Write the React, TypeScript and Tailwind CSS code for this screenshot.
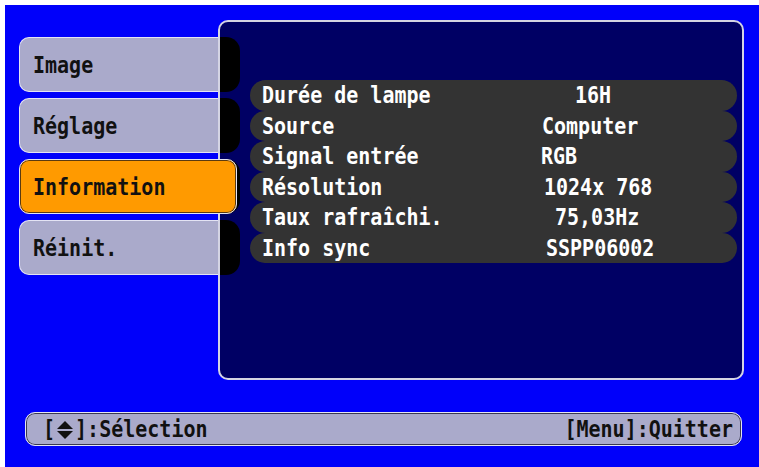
import type { ReactNode } from 'react';

const tabs = [
  { label: 'Image', active: false },
  { label: 'Réglage', active: false },
  { label: 'Information', active: true },
  { label: 'Réinit.', active: false },
];

const rows = [
  { label: 'Durée de lampe', value: '16H', pad: 'pl-[34px]' },
  { label: 'Source', value: 'Computer', pad: 'pl-[1px]' },
  { label: 'Signal entrée', value: 'RGB', pad: 'pl-0' },
  { label: 'Résolution', value: '1024x 768', pad: 'pl-[3px]' },
  { label: 'Taux rafraîchi.', value: '75,03Hz', pad: 'pl-[14px]' },
  { label: 'Info sync', value: 'SSPP06002', pad: 'pl-[5px]' },
];

// tall, narrow OSD lettering
function Osd({ children }: { children: ReactNode }) {
  return <span className="inline-block scale-y-[1.15] whitespace-pre">{children}</span>;
}

function UpDown() {
  return (
    <svg width="18" height="18" viewBox="0 0 18 18" className="inline-block mx-[1px] -mb-[2px]">
      <polygon points="1,8 9,0 17,8" fill="#111" />
      <polygon points="1,10 17,10 9,18" fill="#111" />
    </svg>
  );
}

export default function App() {
  return (
    <div className="w-[759px] h-[467px] bg-white pl-[5px] pt-[5px] overflow-hidden font-['DejaVu_Sans_Mono',monospace] font-bold text-[20px] leading-none">
      <div className="w-full h-full bg-[#0000fa] flex flex-col">
        <div className="flex pt-[15px]">
          {/* menu tabs */}
          <div className="flex flex-col gap-[6px] pt-[17px] pl-[14px] w-[213px]">
            {tabs.map(t => (
              <div
                key={t.label}
                className={`h-[55px] flex items-center pl-[13px] rounded-l-[10px] border border-[#e4e4f4] text-[#111] ${
                  t.active
                    ? 'w-[218px] -mr-[19px] relative z-10 bg-[#ff9a00] rounded-r-[10px] shadow-[inset_0_0_0_1px_#5a3a10]'
                    : 'w-[199px] bg-[#aaaacb] border-r-0'
                }`}
              >
                <Osd>{t.label}</Osd>
              </div>
            ))}
          </div>

          {/* information panel */}
          <div className="w-[526px] h-[360px] border-2 border-[#d4d4e4] rounded-[10px] bg-[#000064] flex">
            <div className="flex flex-col gap-[6px] pt-[15px] w-[20px] shrink-0">
              {tabs.map(t => (
                <div key={t.label} className="h-[55px] bg-black rounded-r-[14px]" />
              ))}
            </div>
            <div className="flex-1 mt-[58px] ml-[10px] mr-[5px]">
              {rows.map(r => (
                <div key={r.label} className="h-[30.5px] rounded-full bg-[#333333] flex items-center pl-[12px] text-white">
                  <div className="w-[279px]">
                    <Osd>{r.label}</Osd>
                  </div>
                  <div className={r.pad}>
                    <Osd>{r.value}</Osd>
                  </div>
                </div>
              ))}
            </div>
          </div>
        </div>

        {/* help bar */}
        <div className="mt-[32px] ml-[20px] w-[717px] h-[34px] rounded-[10px] border border-[#e4e4f4] bg-[#aaaacb] shadow-[inset_0_0_0_1px_#3a3a50] flex items-center justify-between pl-[17px] pr-[8px] text-[#111]">
          <div className="flex items-center">
            <Osd>[</Osd>
            <UpDown />
            <Osd>]:Sélection</Osd>
          </div>
          <Osd>[Menu]:Quitter</Osd>
        </div>
      </div>
    </div>
  );
}
